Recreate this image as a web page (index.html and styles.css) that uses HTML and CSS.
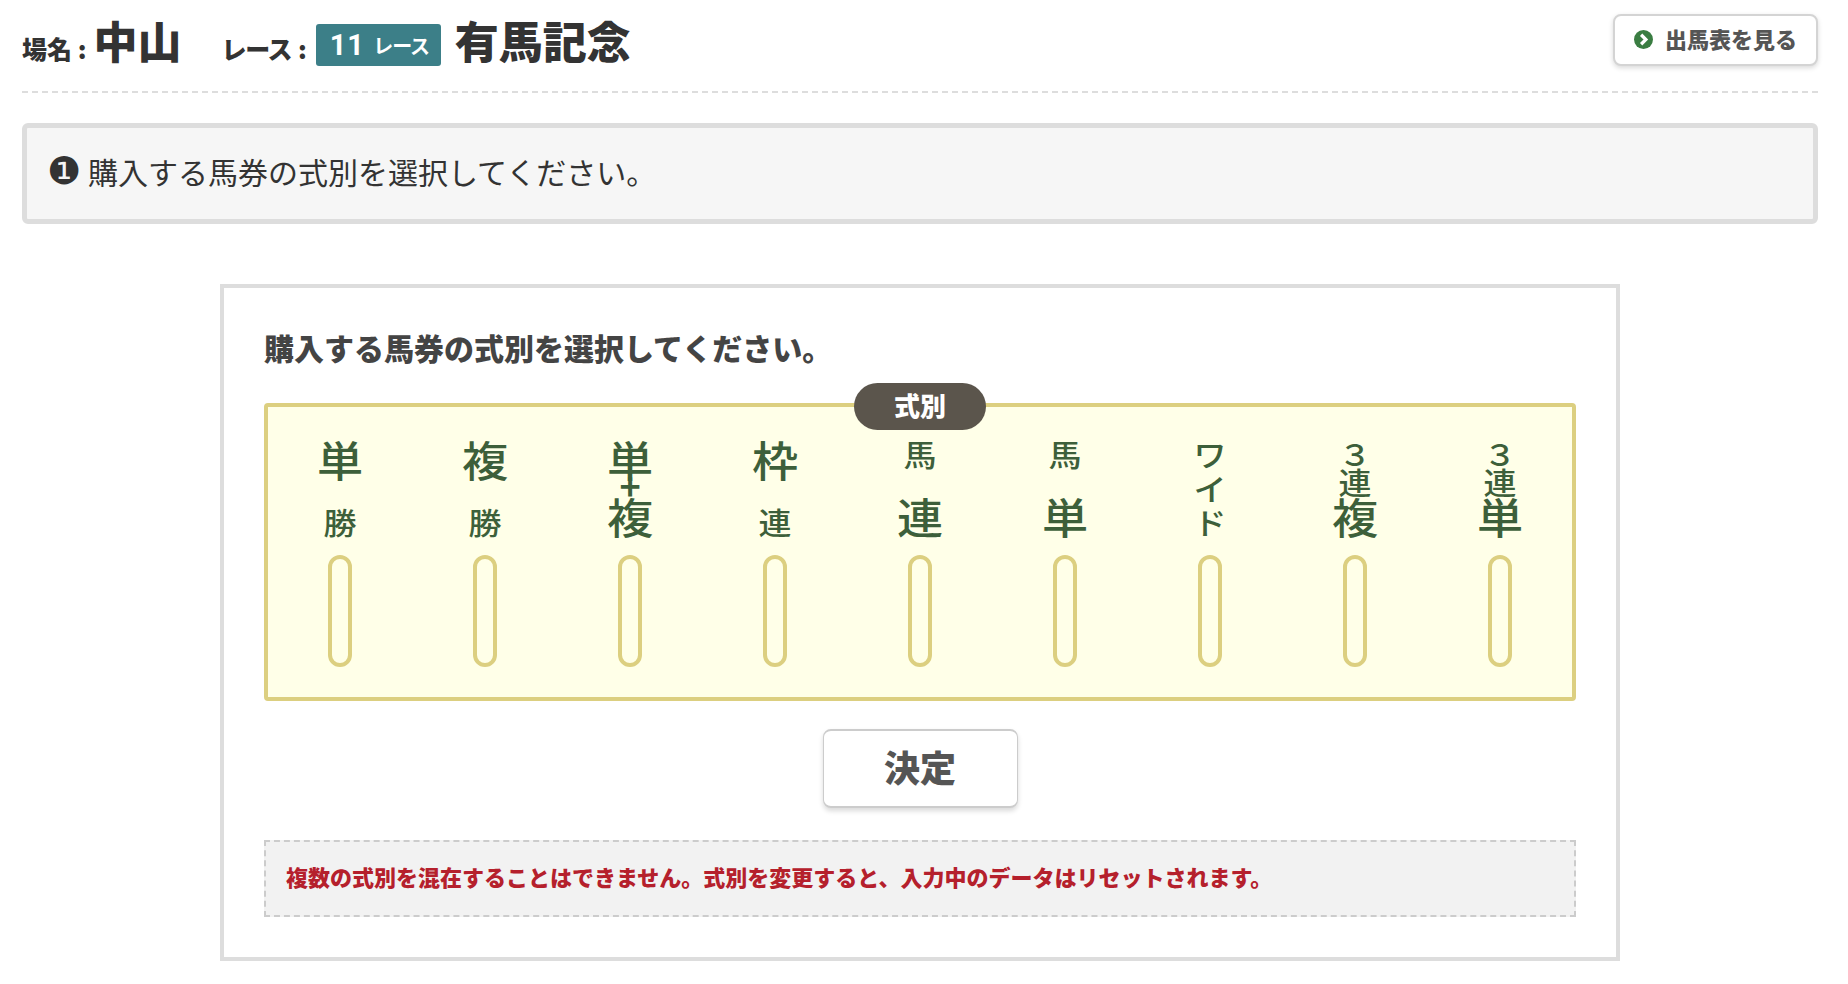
FILE: index.html
```html
<!DOCTYPE html>
<html lang="ja">
<head>
    <meta charset="UTF-8">
    <title>馬券の式別選択</title>
    <link rel="stylesheet" href="styles.css">
</head>
<body>
    <div class="wrap">

        <!-- Race header -->
        <div class="race-head">
            <div class="race-info">
                <span class="race-key">場名 :</span>
                <span class="place-name">中山</span>
                <span class="race-key race-key-second">レース :</span>
                <span class="race-no"><span class="race-num">11</span>レース</span>
                <span class="race-name">有馬記念</span>
            </div>
            <button class="card-button">
                <svg class="card-icon" viewBox="0 0 20 20">
                    <circle cx="10" cy="10" r="10" fill="#3a7d42"/>
                    <path d="M7.5 5 L12.5 10 L7.5 15" fill="none" stroke="#fff" stroke-width="3.4"/>
                </svg>
                出馬表を見る
            </button>
        </div>

        <!-- Step message -->
        <div class="step-box"><span class="step-mark">❶</span>購入する馬券の式別を選択してください。</div>

        <!-- Bet type panel -->
        <div class="panel">
            <h2 class="panel-title">購入する馬券の式別を選択してください。</h2>

            <div class="bet-box">
                <div class="bet-badge">式別</div>

                <div class="bet-col">
                    <div class="bet-label"><span class="big">単</span><span class="small">勝</span></div>
                    <span class="pill"></span>
                </div>
                <div class="bet-col">
                    <div class="bet-label"><span class="big">複</span><span class="small">勝</span></div>
                    <span class="pill"></span>
                </div>
                <div class="bet-col">
                    <div class="bet-label"><span class="big">単</span><span class="plus">+</span><span class="big">複</span></div>
                    <span class="pill"></span>
                </div>
                <div class="bet-col">
                    <div class="bet-label"><span class="big">枠</span><span class="small">連</span></div>
                    <span class="pill"></span>
                </div>
                <div class="bet-col">
                    <div class="bet-label"><span class="small">馬</span><span class="big">連</span></div>
                    <span class="pill"></span>
                </div>
                <div class="bet-col">
                    <div class="bet-label"><span class="small">馬</span><span class="big">単</span></div>
                    <span class="pill"></span>
                </div>
                <div class="bet-col">
                    <div class="bet-label"><span class="small">ワ</span><span class="small">イ</span><span class="small">ド</span></div>
                    <span class="pill"></span>
                </div>
                <div class="bet-col">
                    <div class="bet-label"><span class="small">３</span><span class="small">連</span><span class="big">複</span></div>
                    <span class="pill"></span>
                </div>
                <div class="bet-col">
                    <div class="bet-label"><span class="small">３</span><span class="small">連</span><span class="big">単</span></div>
                    <span class="pill"></span>
                </div>
            </div>

            <button class="decide-button">決定</button>

            <div class="note-box">複数の式別を混在することはできません。式別を変更すると、入力中のデータはリセットされます。</div>
        </div>

    </div>
</body>
</html>
```

FILE: styles.css
```css
body {
    font-family: "Noto Sans CJK JP", sans-serif;
    margin: 0;
    background-color: #fff;
    color: #333;
}

button {
    font-family: inherit;
    background-color: #fff;
    cursor: pointer;
}

.wrap {
    padding: 0 30px 24px 22px;
}

.race-head {
    display: flex;
    justify-content: space-between;
    align-items: flex-start;
    box-sizing: border-box;
    height: 93px;
    padding-top: 14px;
    border-bottom: 2px dashed #ddd;
}

.race-info {
    display: flex;
    align-items: baseline;
    height: 52px;
    font-weight: 900;
    font-feature-settings: "palt";
}

.race-key {
    margin-right: 7px;
    font-size: 25px;
}

.race-key-second {
    margin-left: 41px;
    margin-right: 9px;
}

.place-name {
    font-size: 44px;
    line-height: 52px;
}

.race-no {
    display: flex;
    align-items: center;
    align-self: flex-start;
    margin: 10px 14px 0 0;
    padding: 0 11px 0 14px;
    height: 42px;
    background-color: #3c7f88;
    color: #fff;
    font-size: 20px;
    font-weight: bold;
    border-radius: 3px;
}

.race-num {
    font-family: Roboto, sans-serif;
    font-weight: 700;
    font-size: 29px;
    letter-spacing: 1px;
    margin-right: 9px;
}

.race-name {
    font-size: 44px;
    line-height: 52px;
}

.card-button {
    display: flex;
    align-items: center;
    justify-content: center;
    gap: 12px;
    width: 205px;
    height: 52px;
    padding: 0 0 5px;
    border: 2px solid #d4d4d4;
    border-radius: 8px;
    box-shadow: 0 2px 5px rgba(0, 0, 0, 0.15);
    font-size: 22px;
    font-weight: 900;
    color: #555;
}

.card-icon {
    width: 19px;
    height: 19px;
    margin-top: 3px;
}

.step-box {
    display: flex;
    align-items: center;
    margin-top: 30px;
    height: 85px;
    padding: 0 0 6px 20px;
    border: 5px solid #ddd;
    border-radius: 6px;
    background-color: #f6f6f6;
    font-size: 30px;
}

.step-mark {
    width: 41px;
    font-family: "DejaVu Sans", sans-serif;
    font-size: 38px;
    line-height: 42px;
}

.panel {
    width: 1400px;
    box-sizing: border-box;
    margin: 60px auto 0;
    padding: 39px 40px 40px;
    border: 4px solid #ddd;
}

.panel-title {
    margin: 0 0 36px;
    font-size: 30px;
    font-weight: 900;
    line-height: 40px;
    color: #444;
}

.bet-box {
    position: relative;
    display: grid;
    grid-template-columns: repeat(9, 1fr);
    padding: 31px 0 30px;
    border: 4px solid #dccf80;
    border-radius: 4px;
    background-color: #ffffe8;
}

.bet-badge {
    position: absolute;
    top: -24px;
    left: 50%;
    transform: translateX(-50%);
    width: 132px;
    height: 47px;
    line-height: 43px;
    border-radius: 24px;
    background-color: #5b554c;
    color: #fff;
    font-size: 26px;
    font-weight: 900;
    text-align: center;
}

.bet-col {
    display: flex;
    flex-direction: column;
    align-items: center;
}

.bet-label {
    display: flex;
    flex-direction: column;
    justify-content: space-between;
    align-items: center;
    height: 99px;
    margin-bottom: 18px;
    color: #3d5f3a;
    font-weight: 500;
}

.big {
    font-size: 42px;
    line-height: 42px;
    transform: scaleX(1.1);
}

.small {
    font-size: 30px;
    line-height: 27px;
    transform: scaleX(1.1);
}

.small:first-child {
    margin-top: 2px;
}

.small:last-child {
    margin-bottom: 2px;
}

.plus {
    font-size: 36px;
    font-weight: 700;
    line-height: 13px;
    transform: translateY(-3px);
}

.pill {
    box-sizing: border-box;
    width: 24px;
    height: 112px;
    border: 4px solid #dccf80;
    border-radius: 12px;
}

.decide-button {
    display: block;
    width: 195px;
    height: 79px;
    margin: 28px auto 32px;
    padding: 0 0 5px;
    border: 1px solid #ccc;
    border-top-width: 2px;
    border-bottom-width: 2px;
    border-radius: 8px;
    box-shadow: 0 3px 5px rgba(0, 0, 0, 0.15);
    font-size: 36px;
    font-weight: 900;
    color: #555;
}

.note-box {
    display: flex;
    align-items: center;
    height: 67px;
    padding: 0 0 6px 20px;
    border: 2px dashed #ccc;
    background-color: #f2f2f2;
    color: #b5202c;
    font-size: 22px;
    font-weight: 900;
}
```
